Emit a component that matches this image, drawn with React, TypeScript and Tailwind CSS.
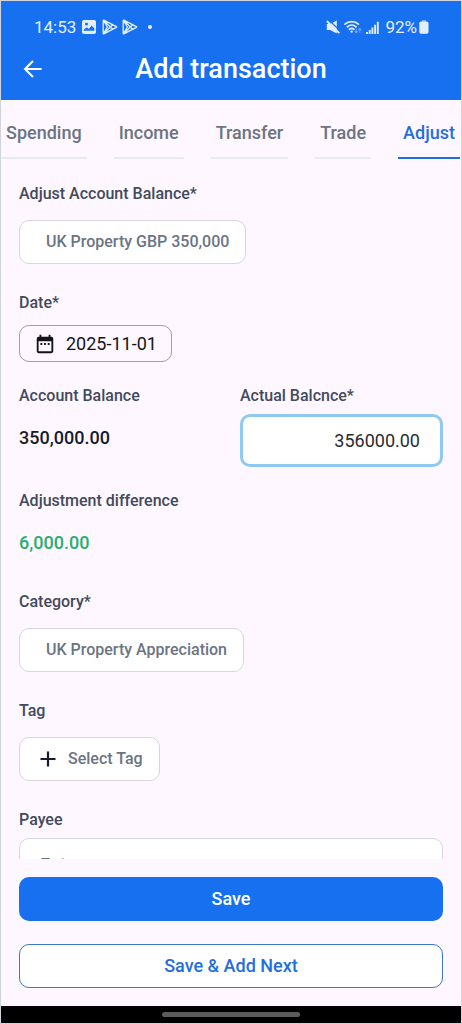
import { useState } from "react";
import type { ReactNode } from "react";

const tabs = ["Spending", "Income", "Transfer", "Trade", "Adjust"];

const labelClass = "block text-base leading-5 font-medium text-[#414a5c]";
const pickerClass =
  "flex h-11 items-center rounded-[10px] border border-[#d5d6de] bg-white text-base font-medium text-[#6b7483]";

function PlayIcon() {
  return (
    <svg viewBox="0 0 16 16" className="h-4 w-4" fill="none" stroke="currentColor" strokeWidth="1.3" strokeLinejoin="round">
      <path d="M1.8 1.2Q1.2.9 1.2 1.8v12.4q0 .9.6.6L14.4 8.4q.7-.4 0-.8ZM1.6 1.4l9 8.8M1.6 14.6l9-8.8M1.6 1.6 5.4 8l-3.8 6.4" />
    </svg>
  );
}

function StatusBar() {
  return (
    <div className="flex h-6 items-center justify-between px-8 text-[17px] leading-6 text-[#e3efff]">
      <div className="flex items-center gap-1">
        <span className="mr-0.5 ml-px">14:53</span>
        <svg viewBox="0 0 14 14" className="mr-0.5 h-3.5 w-3.5">
          <path
            fill="currentColor"
            fillRule="evenodd"
            d="M2 0h10a2 2 0 0 1 2 2v10a2 2 0 0 1-2 2H2a2 2 0 0 1-2-2V2a2 2 0 0 1 2-2Zm2.5 2.6a1.5 1.5 0 1 0 0 3 1.5 1.5 0 0 0 0-3ZM1.6 10.8h10.8V8.6L9.6 5.4 6.8 9 4.8 7.2 1.6 9.8Z"
          />
        </svg>
        <PlayIcon />
        <PlayIcon />
        <span className="ml-1.5 h-1 w-1 rounded-full bg-[#e3efff]" />
      </div>
      <div className="flex items-center">
        <svg viewBox="0 0 14 14" className="mr-1 h-3.5 w-3.5">
          <path fill="currentColor" d="M.8 4h3.4L10.8.4v13.2L4.2 10H.8Z" />
          <path stroke="#1770ef" strokeWidth="1.2" d="M2.3-.4 15 11.6" />
          <path stroke="currentColor" strokeWidth="1.8" d="M.8 1 13.3 13.2" />
        </svg>
        <svg viewBox="0 0 18 14" className="mr-1 h-3.5 w-[18px]" fill="none" stroke="currentColor" strokeLinecap="round">
          <path strokeWidth="1.7" d="M1 4.2a10 10 0 0 1 13.4 0M3.3 6.8a6.8 6.8 0 0 1 8.8 0M5.5 9.3a3.7 3.7 0 0 1 4.4 0" />
          <circle cx="7.7" cy="11.6" r="1.2" fill="currentColor" stroke="none" />
          <path strokeWidth="1" opacity=".5" d="M12.2 9v3.6m-1.2-1.2 1.2 1.2 1.2-1.2M15.8 12.6V8.6m-1.3 1.3 1.3-1.3 1.3 1.3" />
        </svg>
        <svg viewBox="0 0 13 13" className="mr-1.5 h-[13px] w-[13px]" stroke="currentColor" strokeWidth="1.9">
          <path d="M1 11v2M3.7 9v4M6.4 6.5V13M9.1 3.8V13M11.8.8V13" />
        </svg>
        <span>92%</span>
        <svg viewBox="0 0 10 14" className="ml-0.5 h-3.5 w-2.5" fill="currentColor">
          <path opacity=".5" d="M3 0h4v2H3z" />
          <rect x=".3" y="1.4" width="9.2" height="12.4" rx="1.8" />
        </svg>
      </div>
    </div>
  );
}

function Field({ label, children, className }: { label: string; children: ReactNode; className: string }) {
  return (
    <div className={className}>
      <span className={labelClass}>{label}</span>
      {children}
    </div>
  );
}

export default function App() {
  const [active, setActive] = useState("Adjust");
  const [balance, setBalance] = useState("356000.00");

  return (
    <div className="flex h-screen flex-col overflow-hidden border border-[#d0d4da] bg-[#fef7ff] font-['Roboto',sans-serif]">
      <header className="shrink-0 bg-[#1770ef] pt-3.5 pb-[13px]">
        <StatusBar />
        <div className="mt-3 grid h-9 grid-cols-[64px_1fr_64px] items-center">
          <button type="button" aria-label="Back" className="flex justify-center text-white">
            <svg viewBox="0 0 20 20" className="h-5 w-5" fill="none" stroke="currentColor" strokeWidth="2">
              <path d="M18.6 10H2.4M10 2l-8 8 8 8" />
            </svg>
          </button>
          <h1 className="text-center text-[27px] leading-9 font-medium text-white">Add transaction</h1>
        </div>
      </header>

      <nav className="flex shrink-0 gap-[27px] overflow-hidden pt-[21px]">
        {tabs.map((tab) => (
          <button
            key={tab}
            type="button"
            onClick={() => setActive(tab)}
            className={
              tab === active
                ? "shrink-0 border-b-2 border-[#1f6fd8] px-[5px] pb-3 text-lg leading-6 font-medium text-[#1f6fe0]"
                : "shrink-0 border-b-2 border-[#e8eaf1] px-[5px] pb-3 text-lg leading-6 font-medium text-[#6b7483]"
            }
          >
            {tab}
          </button>
        ))}
      </nav>

      <main className="min-h-0 flex-1 overflow-x-hidden overflow-y-auto px-[18px] pt-[25px] [scrollbar-width:none]">
        <Field label="Adjust Account Balance*" className="mb-[29px]">
          <button type="button" className={`${pickerClass} mt-4 pr-4 pl-[26px]`}>
            UK Property GBP 350,000
          </button>
        </Field>

        <Field label="Date*" className="mb-6">
          <button
            type="button"
            className="mt-3 flex h-[37px] items-center gap-2.5 rounded-[10px] border border-[#a29ea6] px-3.5 text-lg text-[#141418]"
          >
            <svg viewBox="0 0 24 24" className="h-[22px] w-[22px]" fill="currentColor">
              <path d="M19 4h-1V2h-2v2H8V2H6v2H5a2 2 0 0 0-2 2v14a2 2 0 0 0 2 2h14a2 2 0 0 0 2-2V6a2 2 0 0 0-2-2Zm0 16H5V9h14ZM9 13H7v-2h2Zm4 0h-2v-2h2Zm4 0h-2v-2h2Z" />
            </svg>
            2025-11-01
          </button>
        </Field>

        <div className="mb-6 grid grid-cols-2 gap-[18px]">
          <Field label="Account Balance" className="">
            <p className="mt-5 text-lg leading-6 font-medium text-[#171a2b]">350,000.00</p>
          </Field>
          <div>
            <label htmlFor="actual" className={labelClass}>
              Actual Balcnce*
            </label>
            <input
              id="actual"
              value={balance}
              onChange={(e) => setBalance(e.target.value)}
              className="mt-2 h-[53px] w-full rounded-[10px] border-3 border-[#8ec9f2] bg-white pr-5 text-right text-lg text-[#292b33] outline-none"
            />
          </div>
        </div>

        <Field label="Adjustment difference" className="mb-[37px]">
          <p className="mt-5 text-lg leading-6 font-medium text-[#29ae70]">6,000.00</p>
        </Field>

        <Field label="Category*" className="mb-[29px]">
          <button type="button" className={`${pickerClass} mt-4 pr-4 pl-[26px]`}>
            UK Property Appreciation
          </button>
        </Field>

        <Field label="Tag" className="mb-[29px]">
          <button type="button" className={`${pickerClass} mt-4 gap-3 pr-4 pl-5`}>
            <svg viewBox="0 0 16 16" className="h-4 w-4 text-[#171a2b]" fill="none" stroke="currentColor" strokeWidth="2.2">
              <path d="M8 .5v15M.5 8h15" />
            </svg>
            Select Tag
          </button>
        </Field>

        <label htmlFor="payee" className={labelClass}>
          Payee
        </label>
        <input
          id="payee"
          placeholder="Enter"
          className="mt-2 h-[53px] w-full rounded-[10px] border border-[#d5d6de] bg-white px-5 text-lg placeholder:text-[#6b7483]"
        />
      </main>

      <footer className="flex shrink-0 flex-col gap-[23px] px-[18px] py-[18px]">
        <button type="button" className="h-11 rounded-[10px] bg-[#1770ef] text-lg font-medium text-white">
          Save
        </button>
        <button
          type="button"
          className="h-11 rounded-[10px] border border-[#3b78c9] bg-white text-lg font-medium text-[#1f6fe0]"
        >
          Save &amp; Add Next
        </button>
      </footer>

      <div className="flex h-[17px] shrink-0 items-center justify-center bg-black">
        <div className="h-[5px] w-[30%] rounded-full bg-[#5c5c5c]" />
      </div>
    </div>
  );
}
